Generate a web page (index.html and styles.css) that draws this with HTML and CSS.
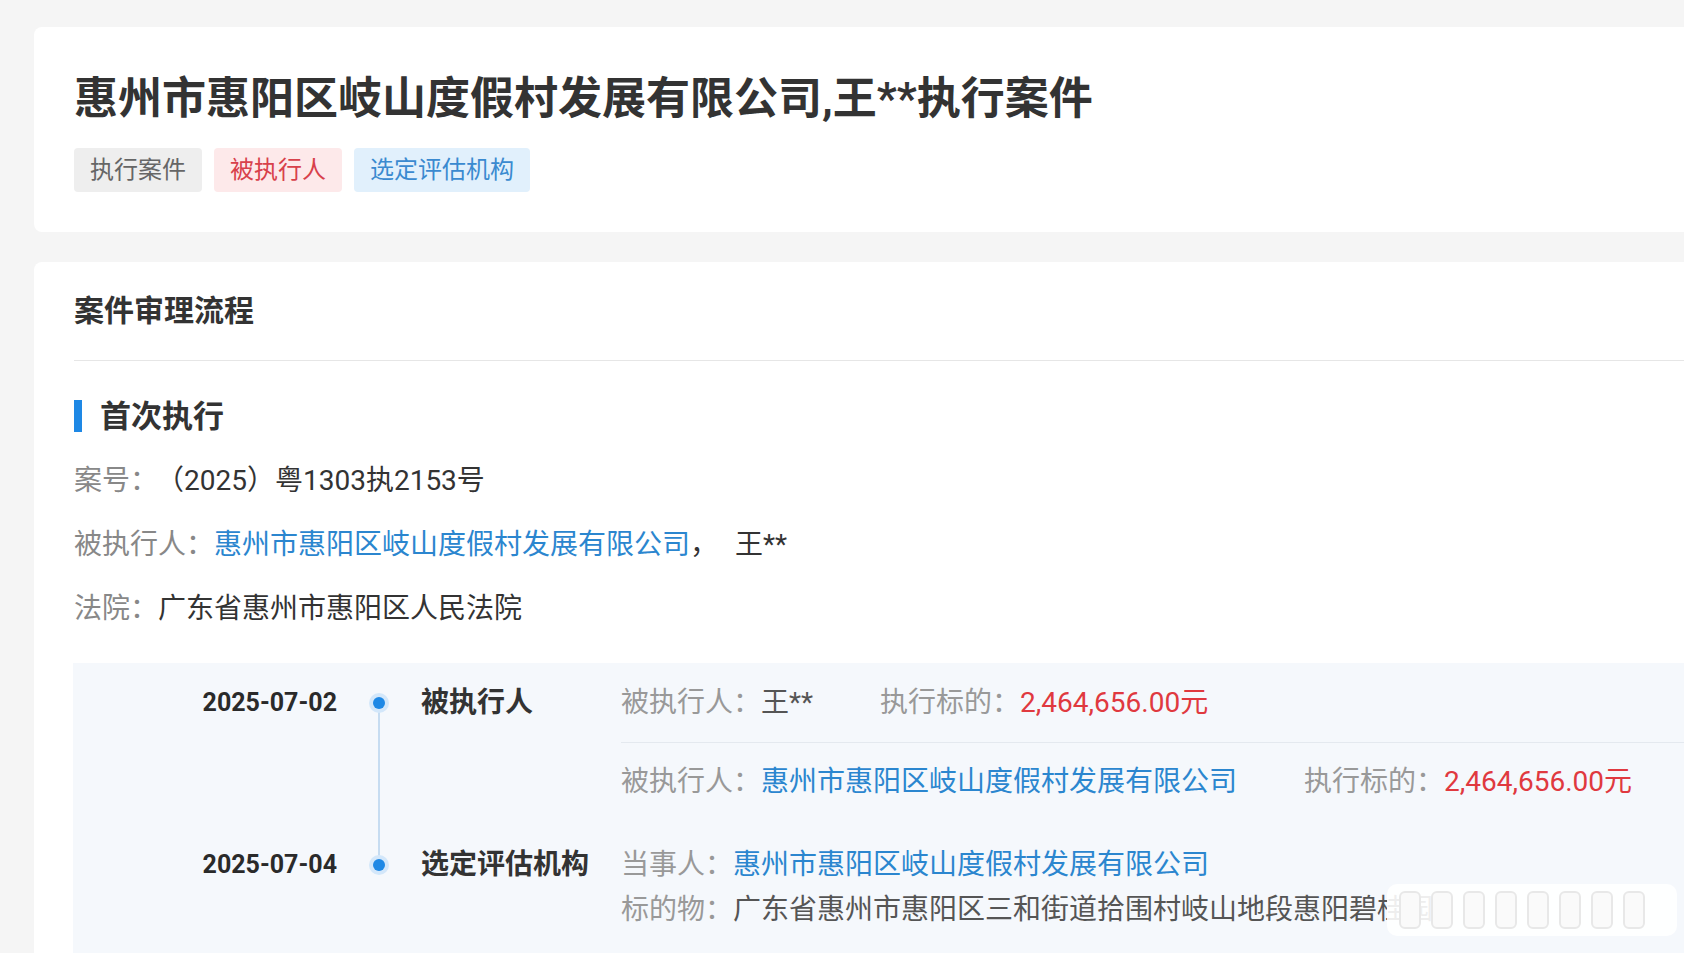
FILE: index.html
```html
<!DOCTYPE html>
<html lang="zh-CN">
<head>
<meta charset="utf-8">
<title>执行案件</title>
<link rel="stylesheet" href="styles.css">
</head>
<body>
<div class="page">
  <section class="card head-card">
    <h1 class="case-title">惠州市惠阳区岐山度假村发展有限公司,王**执行案件</h1>
    <div class="tags">
      <span class="tag tag-gray">执行案件</span>
      <span class="tag tag-red">被执行人</span>
      <span class="tag tag-blue">选定评估机构</span>
    </div>
  </section>

  <section class="card flow-card">
    <h2 class="flow-title">案件审理流程</h2>
    <h3 class="stage-title">首次执行</h3>
    <div class="info-row"><span class="lbl">案号：</span><span class="val case-no">（2025）粤1303执2153号</span></div>
    <div class="info-row"><span class="lbl">被执行人：</span><span class="link">惠州市惠阳区岐山度假村发展有限公司</span><span class="val">，</span><span class="val sep-name">王**</span></div>
    <div class="info-row"><span class="lbl">法院：</span><span class="val">广东省惠州市惠阳区人民法院</span></div>

    <div class="timeline">
      <div class="tl-item">
        <div class="tl-date">2025-07-02</div>
        <div class="tl-axis has-line"><span class="tl-dot"></span></div>
        <div class="tl-event">被执行人</div>
        <div class="tl-details">
          <div class="d-row d-split">
            <span class="pair"><span class="d-lbl">被执行人：</span><span class="d-val">王**</span></span>
            <span class="pair"><span class="d-lbl">执行标的：</span><span class="amount">2,464,656.00元</span></span>
          </div>
          <div class="d-row d-second">
            <span class="pair"><span class="d-lbl">被执行人：</span><span class="link">惠州市惠阳区岐山度假村发展有限公司</span></span>
            <span class="pair"><span class="d-lbl">执行标的：</span><span class="amount">2,464,656.00元</span></span>
          </div>
        </div>
      </div>

      <div class="tl-item tl-item-2">
        <div class="tl-date">2025-07-04</div>
        <div class="tl-axis"><span class="tl-dot"></span></div>
        <div class="tl-event">选定评估机构</div>
        <div class="tl-details tight">
          <div class="d-row"><span class="d-lbl">当事人：</span><span class="link">惠州市惠阳区岐山度假村发展有限公司</span></div>
          <div class="d-row clip-row"><span class="d-lbl">标的物：</span><span class="d-val">广东省惠州市惠阳区三和街道拾围村岐山地段惠阳碧桂园</span>
            <span class="watermark"><i></i><i></i><i></i><i></i><i></i><i></i><i></i><i></i></span>
          </div>
        </div>
      </div>
    </div>
  </section>
</div>
</body>
</html>
```

FILE: styles.css
```css
* { box-sizing: border-box; margin: 0; padding: 0; }

html, body {
  background: #f5f5f5;
  overflow: hidden;
  height: 953px;
}

body {
  font-family: Roboto, "Noto Sans CJK SC", "Noto Sans", sans-serif;
  color: #333;
}

.page {
  width: 1740px;
  padding: 27px 0 0 34px;
  display: flex;
  flex-direction: column;
  gap: 30px;
}

.card {
  background: #fff;
  border-radius: 8px;
}

.head-card {
  padding: 42px 40px 40px 40px;
}

.case-title {
  font-size: 44px;
  line-height: 60px;
  font-weight: 700;
  color: #333;
}

.tags {
  margin-top: 19px;
  display: flex;
  gap: 12px;
}

.tag {
  display: inline-block;
  height: 44px;
  line-height: 44px;
  padding: 0 16px;
  font-size: 24px;
  border-radius: 4px;
}
.tag-gray { background: #eeeeee; color: #666; }
.tag-red { background: #fde9ea; color: #d8414b; }
.tag-blue { background: #e1f0fc; color: #3a8ad0; }

.flow-card {
  padding: 29px 0 40px 40px;
}

.flow-title {
  font-size: 30px;
  line-height: 40px;
  font-weight: 700;
  color: #333;
  padding-bottom: 29px;
  border-bottom: 1px solid #e6e6e6;
}

.stage-title {
  margin-top: 24px;
  font-size: 31px;
  line-height: 64px;
  font-weight: 700;
  color: #333;
  display: flex;
  align-items: center;
  gap: 18px;
}
.stage-title::before {
  content: "";
  width: 8px;
  height: 32px;
  background: #1e88e5;
  margin-top: -2px;
}

.info-row {
  font-size: 28px;
  line-height: 64px;
  white-space: nowrap;
}
.lbl { color: #888; }
.val { color: #333; }
.case-no { margin-left: 12px; }
.link { color: #2b86cf; }
.sep-name { margin-left: 17px; }

.timeline {
  margin-top: 22px;
  margin-left: -1px;
  background: #f5f8fc;
  padding: 20px 0 60px 0;
  display: flex;
  flex-direction: column;
  gap: 43px;
}

.tl-item {
  display: grid;
  grid-template-columns: 264px 84px 200px 1fr;
  align-items: start;
}

.tl-date {
  font-family: Roboto, "Noto Sans", sans-serif;
  font-size: 25px;
  line-height: 40px;
  font-weight: 700;
  color: #2a2a2a;
  text-align: right;
}

.tl-axis {
  position: relative;
  height: 40px;
  display: flex;
  justify-content: center;
  align-items: center;
}
.tl-dot {
  width: 12px;
  height: 12px;
  border-radius: 50%;
  background: #1e88e5;
  box-shadow: 0 0 0 4px #d3e7fa;
  position: relative;
  z-index: 1;
}
.has-line::after {
  content: "";
  position: absolute;
  left: 41px;
  top: 20px;
  width: 2px;
  height: 162px;
  background: #c6dcf1;
}

.tl-event {
  font-size: 28px;
  line-height: 40px;
  font-weight: 700;
  color: #333;
}

.tl-details {
  font-size: 28px;
  white-space: nowrap;
}
.d-row {
  line-height: 40px;
}
.d-split {
  padding-bottom: 19px;
  border-bottom: 1px solid #e4e9ef;
}
.d-second {
  margin-top: 19px;
}
.pair + .pair { margin-left: 60px; }
.d-lbl { color: #999; }
.d-val { color: #555; }
.amount { color: #e0393f; }

.tight {
  display: flex;
  flex-direction: column;
  gap: 5px;
}

.clip-row {
  position: relative;
}
.watermark {
  position: absolute;
  left: 766px;
  top: -6px;
  width: 290px;
  height: 52px;
  background: rgba(255, 255, 255, 0.9);
  border-radius: 10px;
  display: flex;
  align-items: center;
  gap: 10px;
  padding: 0 12px;
}
.watermark i {
  display: block;
  width: 22px;
  height: 38px;
  border-radius: 6px;
  border: 2px solid #e8e8e8;
  background: #fafafa;
}
```
